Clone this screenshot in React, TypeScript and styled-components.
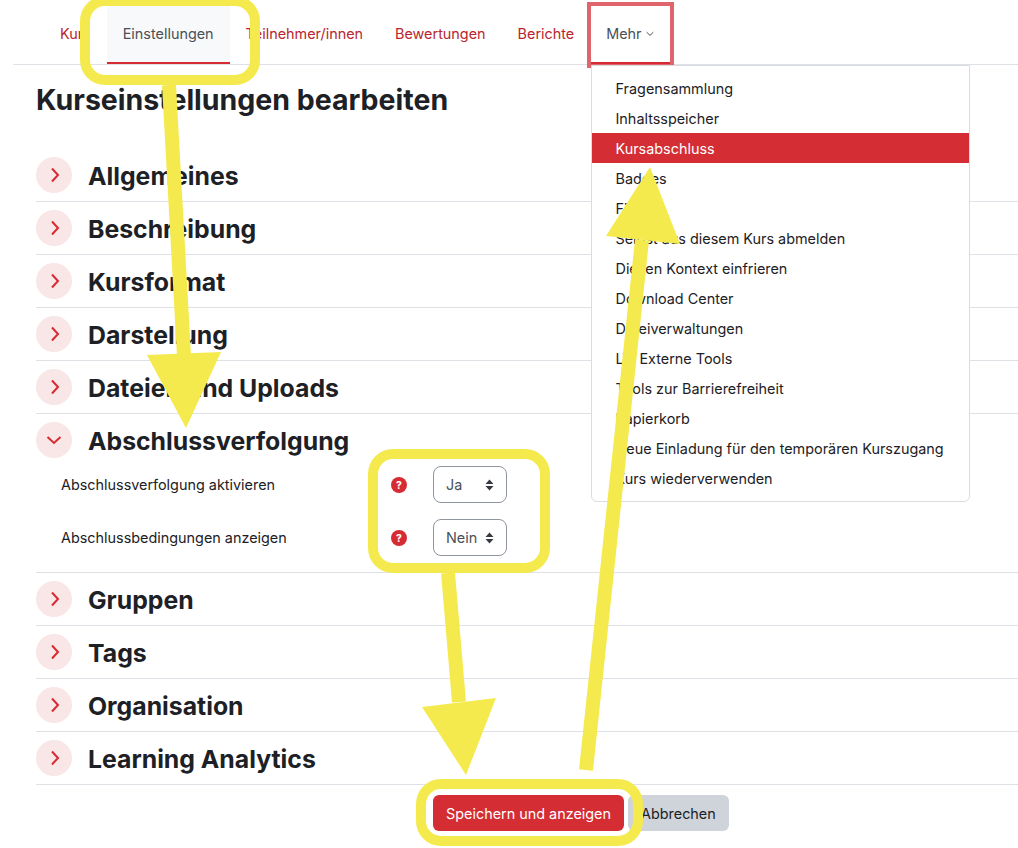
import React from "react";
import styled, { createGlobalStyle } from "styled-components";

const Global = createGlobalStyle`
  html, body { margin: 0; padding: 0; background: #fff; }
  body { font-family: Inter, "Liberation Sans", sans-serif; color: #1d2125; }
  * { box-sizing: border-box; }
`;

const Page = styled.div`
  position: relative;
  width: 1018px;
  height: 848px;
  overflow: hidden;
  background: #fff;
`;

const Nav = styled.nav`
  display: flex;
  align-items: flex-end;
  height: 65px;
  margin-left: 13px;
  padding-left: 31px;
  border-bottom: 1px solid #dee2e6;
`;

const Tab = styled.a<{ $active?: boolean; $open?: boolean }>`
  position: relative;
  display: flex;
  align-items: center;
  gap: 4px;
  height: 58px;
  padding: 0 16px;
  font-size: 14.4px;
  line-height: 20px;
  color: ${(p) => (p.$active || p.$open ? "#495057" : "#b9252e")};
  background: ${(p) => (p.$active ? "#f8f9fa" : "transparent")};
  border-bottom: 2px solid ${(p) => (p.$active || p.$open ? "#d62b33" : "transparent")};
`;

const TabOutline = styled.span`
  position: absolute;
  left: -3px;
  right: -4px;
  top: -4px;
  bottom: -6px;
  border: 4px solid #e0646c;
`;

const Main = styled.main`
  padding-left: 36px;
`;

const Title = styled.h1`
  margin: 18px 0 32px;
  font-size: 28.5px;
  line-height: 34px;
  font-weight: 700;
  color: #1d2125;
`;

const Section = styled.section`
  border-bottom: 1px solid #dee2e6;
`;

const SectionHead = styled.div`
  display: flex;
  align-items: center;
  gap: 16px;
  height: 52px;
  padding: 8px 0;
`;

const Toggle = styled.span`
  display: flex;
  align-items: center;
  justify-content: center;
  width: 36px;
  height: 36px;
  border-radius: 50%;
  background: #f9e6e7;
`;

const SectionTitle = styled.h2`
  margin: 0;
  padding-top: 2px;
  font-size: 24.8px;
  line-height: 34px;
  font-weight: 700;
  color: #1d2125;
`;

const FormBody = styled.div`
  padding: 0 0 0 25px;
`;

const FormRow = styled.div`
  display: grid;
  grid-template-columns: 330px 42px 74px;
  align-items: center;
  height: 37px;
  margin-bottom: 16px;
`;

const FormLabel = styled.label`
  font-size: 14.4px;
  color: #1d2125;
`;

const Help = styled.span`
  display: flex;
  align-items: center;
  justify-content: center;
  width: 16px;
  height: 16px;
  border-radius: 50%;
  background: #d62b33;
  color: #fff;
  font-size: 10px;
  font-weight: 800;
`;

const Select = styled.div`
  display: flex;
  align-items: center;
  justify-content: space-between;
  height: 37px;
  padding: 0 12px;
  border: 1px solid #8f959e;
  border-radius: 8px;
  font-size: 14.4px;
  color: #495057;
`;

const Actions = styled.div`
  display: flex;
  gap: 4px;
  margin: 10px 0 0 397px;
`;

const Button = styled.button<{ $primary?: boolean }>`
  height: 36px;
  padding: 0 13px;
  border: 0;
  border-radius: 6px;
  font-family: inherit;
  font-size: 14.4px;
  color: ${(p) => (p.$primary ? "#fff" : "#1d2125")};
  background: ${(p) => (p.$primary ? "#d42d34" : "#ced4da")};
`;

const Menu = styled.ul`
  position: absolute;
  left: 591px;
  top: 65px;
  width: 379px;
  margin: 0;
  padding: 7px 0 8px;
  list-style: none;
  background: #fff;
  border: 1px solid #d9dce1;
  border-radius: 0 0 6px 6px;
`;

const MenuItem = styled.li<{ $active?: boolean }>`
  height: 30px;
  padding: 1px 23.5px 0;
  font-size: 14.4px;
  line-height: 29px;
  white-space: nowrap;
  color: ${(p) => (p.$active ? "#fff" : "#1d2125")};
  background: ${(p) => (p.$active ? "#d42d34" : "transparent")};
`;

const Annotations = styled.svg`
  position: absolute;
  left: 0;
  top: 0;
  width: 1018px;
  height: 848px;
  pointer-events: none;
`;

const Chevron = ({ open }: { open?: boolean }) =>
  open ? (
    <svg width="16" height="10" viewBox="0 0 16 10" fill="none">
      <path d="M1.5 2 8 8l6.5-6" stroke="#d62b33" strokeWidth="2" />
    </svg>
  ) : (
    <svg width="12" height="16" viewBox="0 0 12 16" fill="none">
      <path d="M4 1.5 10 8l-6 6.5" stroke="#d62b33" strokeWidth="2" />
    </svg>
  );

const SmallChevron = () => (
  <svg width="8" height="6" viewBox="0 0 8 6" fill="none">
    <path d="M.7 1.2 4 4.4l3.3-3.2" stroke="#495057" strokeWidth="1" />
  </svg>
);

const UpDown = () => (
  <svg width="9" height="12" viewBox="0 0 9 12">
    <path d="M4.5 0.5 8.5 5H0.5zM0.5 7h8l-4 4.5z" fill="#343a40" />
  </svg>
);

const before = ["Allgemeines", "Beschreibung", "Kursformat", "Darstellung", "Dateien und Uploads"];
const after = ["Gruppen", "Tags", "Organisation", "Learning Analytics"];
const menu = [
  "Fragensammlung",
  "Inhaltsspeicher",
  "Kursabschluss",
  "Badges",
  "Filter",
  "Selbst aus diesem Kurs abmelden",
  "Diesen Kontext einfrieren",
  "Download Center",
  "Dateiverwaltungen",
  "LTI Externe Tools",
  "Tools zur Barrierefreiheit",
  "Papierkorb",
  "Neue Einladung für den temporären Kurszugang",
  "Kurs wiederverwenden",
];

const Closed = ({ name }: { name: string }) => (
  <Section>
    <SectionHead>
      <Toggle>
        <Chevron />
      </Toggle>
      <SectionTitle>{name}</SectionTitle>
    </SectionHead>
  </Section>
);

const Y = "#f4ea4e";

export default function App() {
  return (
    <Page>
      <Global />
      <Nav>
        <Tab>Kurs</Tab>
        <Tab $active>Einstellungen</Tab>
        <Tab>Teilnehmer/innen</Tab>
        <Tab>Bewertungen</Tab>
        <Tab>Berichte</Tab>
        <Tab $open>
          Mehr <SmallChevron />
          <TabOutline />
        </Tab>
      </Nav>
      <Main>
        <Title>Kurseinstellungen bearbeiten</Title>
        {before.map((n) => (
          <Closed key={n} name={n} />
        ))}
        <Section>
          <SectionHead>
            <Toggle>
              <Chevron open />
            </Toggle>
            <SectionTitle>Abschlussverfolgung</SectionTitle>
          </SectionHead>
          <FormBody>
            <FormRow>
              <FormLabel>Abschlussverfolgung aktivieren</FormLabel>
              <Help>?</Help>
              <Select>
                Ja <UpDown />
              </Select>
            </FormRow>
            <FormRow>
              <FormLabel>Abschlussbedingungen anzeigen</FormLabel>
              <Help>?</Help>
              <Select>
                Nein <UpDown />
              </Select>
            </FormRow>
          </FormBody>
        </Section>
        {after.map((n) => (
          <Closed key={n} name={n} />
        ))}
        <Actions>
          <Button $primary>Speichern und anzeigen</Button>
          <Button>Abbrechen</Button>
        </Actions>
      </Main>
      <Menu>
        {menu.map((m) => (
          <MenuItem key={m} $active={m === "Kursabschluss"}>
            {m}
          </MenuItem>
        ))}
      </Menu>
      <Annotations viewBox="0 0 1018 848">
        <g fill="none" stroke={Y} strokeWidth="10">
          <rect x="85" y="1" width="170" height="79" rx="20" />
          <rect x="373" y="454" width="172" height="114" rx="20" />
          <rect x="421" y="784" width="217" height="57" rx="20" />
        </g>
        <g fill="none" stroke={Y} strokeWidth="14">
          <path d="M169 85 184 356" />
          <path d="M448 573 459 702" />
          <path d="M586 770 642 240" />
        </g>
        <g fill={Y}>
          <polygon points="147,355 221,352 186,428" />
          <polygon points="422,707 496,698 466,775" />
          <polygon points="606,236 680,244 650,167" />
        </g>
      </Annotations>
    </Page>
  );
}
